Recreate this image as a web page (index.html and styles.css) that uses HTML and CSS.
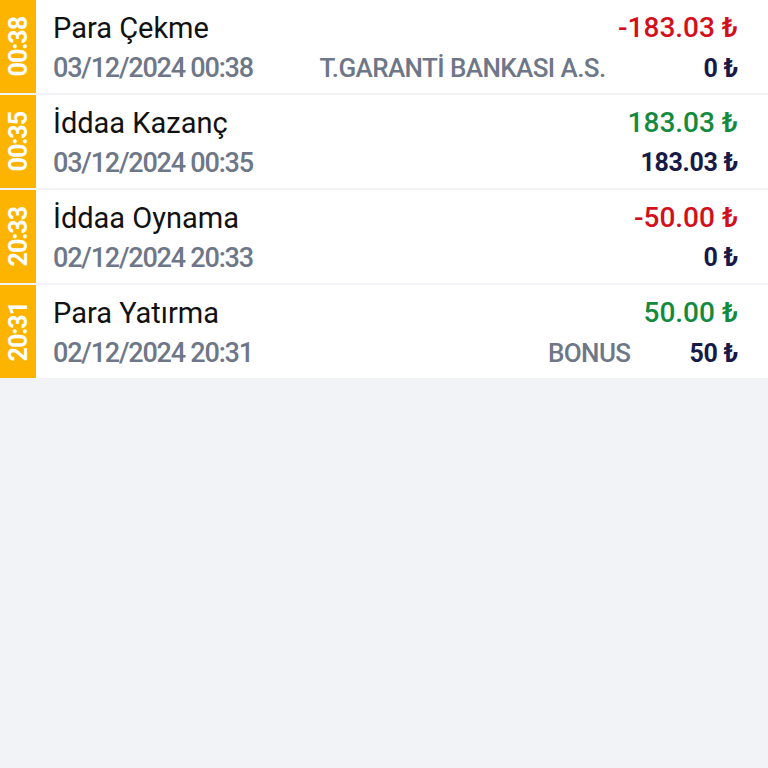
FILE: index.html
```html
<!DOCTYPE html>
<html lang="tr">
<head>
    <meta charset="UTF-8">
    <meta name="viewport" content="width=device-width, initial-scale=1.0">
    <title>Hesap Hareketleri</title>
    <link rel="stylesheet" href="styles.css">
</head>
<body>
    <div class="history">
        <div class="tx">
            <div class="tx-time"><span>00:38</span></div>
            <div class="tx-info">
                <div class="tx-title">Para Çekme</div>
                <div class="tx-date">03/12/2024 00:38</div>
            </div>
            <div class="tx-values">
                <div class="tx-amount negative">-183.03 ₺</div>
                <div class="tx-balance-line">
                    <span class="tx-note note-bank">T.GARANTİ BANKASI A.S.</span>
                    <span class="tx-balance">0 ₺</span>
                </div>
            </div>
        </div>

        <div class="tx">
            <div class="tx-time"><span>00:35</span></div>
            <div class="tx-info">
                <div class="tx-title">İddaa Kazanç</div>
                <div class="tx-date">03/12/2024 00:35</div>
            </div>
            <div class="tx-values">
                <div class="tx-amount positive">183.03 ₺</div>
                <div class="tx-balance-line">
                    <span class="tx-balance">183.03 ₺</span>
                </div>
            </div>
        </div>

        <div class="tx">
            <div class="tx-time"><span>20:33</span></div>
            <div class="tx-info">
                <div class="tx-title">İddaa Oynama</div>
                <div class="tx-date">02/12/2024 20:33</div>
            </div>
            <div class="tx-values">
                <div class="tx-amount negative">-50.00 ₺</div>
                <div class="tx-balance-line">
                    <span class="tx-balance">0 ₺</span>
                </div>
            </div>
        </div>

        <div class="tx">
            <div class="tx-time"><span>20:31</span></div>
            <div class="tx-info">
                <div class="tx-title">Para Yatırma</div>
                <div class="tx-date">02/12/2024 20:31</div>
            </div>
            <div class="tx-values">
                <div class="tx-amount positive">50.00 ₺</div>
                <div class="tx-balance-line">
                    <span class="tx-note note-bonus">BONUS</span>
                    <span class="tx-balance">50 ₺</span>
                </div>
            </div>
        </div>
    </div>
</body>
</html>
```

FILE: styles.css
```css
body {
    margin: 0;
    padding: 0;
    background-color: #f2f3f7;
    font-family: Roboto, "Noto Sans", sans-serif;
    color: #111;
}

.history {
    display: flex;
    flex-direction: column;
    gap: 2px;
}

.tx {
    display: flex;
    height: 93px;
    background-color: #fff;
}

.tx-time {
    width: 36px;
    flex-shrink: 0;
    background-color: #fdb400;
    display: flex;
    align-items: center;
    justify-content: center;
}

.tx-time span {
    writing-mode: vertical-rl;
    transform: rotate(180deg);
    color: #fff;
    font-weight: 700;
    font-size: 25px;
    letter-spacing: -1px;
}

.tx-info {
    flex: 1;
    padding: 8px 0 0 17px;
}

.tx-title,
.tx-date,
.tx-amount,
.tx-balance-line {
    height: 40px;
    line-height: 40px;
    white-space: nowrap;
}

.tx-title {
    font-size: 29px;
    letter-spacing: 0;
}

.tx-date {
    font-size: 27px;
    font-weight: 500;
    color: #6e7788;
    letter-spacing: -1.2px;
}

.tx-values {
    padding: 8px 30px 0 0;
    text-align: right;
}

.tx-amount {
    font-size: 28px;
    font-weight: 500;
    letter-spacing: 0;
}

.tx-amount.negative {
    color: #d40f1c;
}

.tx-amount.positive {
    color: #138a3e;
}

.tx-balance-line {
    display: flex;
    justify-content: flex-end;
    align-items: baseline;
}

.tx-note {
    font-size: 26px;
    font-weight: 500;
    color: #6e7788;
    letter-spacing: -0.6px;
}

.note-bank {
    margin-right: 98px;
}

.note-bonus {
    margin-right: 59px;
}

.tx-balance {
    font-size: 25px;
    font-weight: 700;
    color: #171a47;
    letter-spacing: -0.3px;
}
```
